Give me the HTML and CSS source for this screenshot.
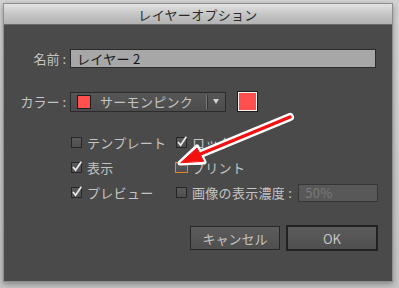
FILE: index.html
```html
<!DOCTYPE html>
<html lang="ja">
<head>
    <meta charset="UTF-8">
    <title>レイヤーオプション</title>
    <link rel="stylesheet" href="styles.css">
</head>
<body>
    <div class="dialog">
        <div class="title-bar">レイヤーオプション</div>

        <div class="dialog-body">
            <!-- 名前 -->
            <div class="field-row name-row">
                <span class="field-label">名前 :</span>
                <div class="text-input">レイヤー 2</div>
            </div>

            <!-- カラー -->
            <div class="field-row color-row">
                <span class="field-label">カラー :</span>
                <div class="select-box">
                    <span class="swatch-small"></span>
                    <span class="select-value">サーモンピンク</span>
                    <span class="select-divider"></span>
                    <span class="select-arrow"></span>
                </div>
                <span class="swatch-large"></span>
            </div>

            <!-- オプション -->
            <div class="options">
                <label class="option"><span class="check"></span>テンプレート</label>
                <label class="option"><span class="check checked"><svg viewBox="0 0 11 11"><path d="M2 5 L4.6 8.3 L10.3 -0.3"/></svg></span>ロック</label>
                <label class="option"><span class="check checked"><svg viewBox="0 0 11 11"><path d="M2 5 L4.6 8.3 L10.3 -0.3"/></svg></span>表示</label>
                <label class="option"><span class="check focused"></span>プリント</label>
                <label class="option"><span class="check checked"><svg viewBox="0 0 11 11"><path d="M2 5 L4.6 8.3 L10.3 -0.3"/></svg></span>プレビュー</label>
                <label class="option"><span class="check"></span>画像の表示濃度 :<span class="dim-input">50%</span></label>
            </div>

            <!-- ボタン -->
            <div class="buttons">
                <button class="btn">キャンセル</button>
                <button class="btn btn-default">OK</button>
            </div>
        </div>
    </div>

    <!-- 赤い矢印 -->
    <svg class="annotation" width="399" height="288" viewBox="0 0 399 288">
        <g fill="#fff" stroke="#fff" stroke-linejoin="round" stroke-linecap="round">
            <line x1="290" y1="117" x2="198" y2="155" stroke-width="8"/>
            <polygon points="180,163 197,147 204,162" stroke-width="5"/>
        </g>
        <g fill="#f21010" stroke="#f21010" stroke-linejoin="round" stroke-linecap="round">
            <line x1="290" y1="117" x2="198" y2="155" stroke-width="3.5"/>
            <polygon points="181,162.5 197,148 203.5,161" stroke-width="1"/>
        </g>
    </svg>
</body>
</html>
```

FILE: styles.css
```css
* {
    margin: 0;
    padding: 0;
    box-sizing: border-box;
}

body {
    width: 399px;
    height: 288px;
    background: linear-gradient(180deg, #d4d4d4 0%, #c6c6c6 100%);
    font-family: "Noto Sans CJK JP", "Noto Sans", sans-serif;
    font-size: 13px;
    color: #c4c4c4;
    position: relative;
    overflow: hidden;
}

/* ダイアログ */
.dialog {
    width: 390px;
    height: 279px;
    margin: 3px;
    border: 1px solid #8e8e8e;
    background: #4a4a4a;
    box-shadow: 0 2px 6px rgba(0, 0, 0, 0.35);
    display: flex;
    flex-direction: column;
}

.title-bar {
    height: 21px;
    background: linear-gradient(180deg, #e2e2e2 0%, #c6c6c6 50%, #b2b2b2 100%);
    border-bottom: 1px solid #6a6a6a;
    color: #2a2a2a;
    text-align: center;
    line-height: 21px;
    font-size: 13px;
    letter-spacing: 0.3px;
}

.dialog-body {
    flex: 1;
    padding: 24px 14px 0 0;
    display: flex;
    flex-direction: column;
}

/* 行 */
.field-row {
    display: flex;
    align-items: center;
}

.field-label {
    width: 62px;
    margin-right: 4px;
    text-align: right;
    white-space: nowrap;
}

.name-row {
    height: 19px;
}

.text-input {
    width: 306px;
    height: 19px;
    background: #a7a7a7;
    border: 1px solid #2b2b2b;
    color: #151515;
    padding-left: 6px;
    line-height: 17px;
    letter-spacing: 0.3px;
}

.color-row {
    height: 21px;
    margin-top: 23px;
}

.select-box {
    width: 156px;
    height: 20px;
    display: flex;
    align-items: center;
    background: linear-gradient(180deg, #565656 0%, #4c4c4c 100%);
    border: 1px solid #2b2b2b;
    padding-left: 6px;
}

.swatch-small {
    width: 14px;
    height: 14px;
    background: #ff4f4f;
    border: 1px solid #1e1e1e;
}

.select-value {
    margin-left: 9px;
    flex: 1;
    white-space: nowrap;
    letter-spacing: 0.3px;
}

.select-divider {
    width: 1px;
    height: 14px;
    background: #7a7a7a;
    box-shadow: 1px 0 0 #333;
}

.select-arrow {
    width: 0;
    height: 0;
    margin: 0 6px 0 6px;
    border-left: 3.5px solid transparent;
    border-right: 3.5px solid transparent;
    border-top: 5px solid #d0d0d0;
}

.swatch-large {
    width: 21px;
    height: 21px;
    margin-left: 11px;
    background: #ff4f4f;
    border: 1px solid #1e1e1e;
    box-shadow: inset 0 0 0 1px #f4f4f4;
}

/* チェックボックス */
.options {
    margin-top: 18px;
    padding-left: 67px;
    display: grid;
    grid-template-columns: 105px 1fr;
    grid-auto-rows: 25px;
}

.option {
    display: flex;
    align-items: center;
    white-space: nowrap;
    letter-spacing: 0.3px;
}

.check {
    width: 11px;
    height: 11px;
    margin-right: 5px;
    border: 1px solid #262626;
    background: linear-gradient(180deg, #5a5a5a 0%, #4e4e4e 100%);
    position: relative;
    flex-shrink: 0;
}

.check svg {
    position: absolute;
    left: -1px;
    top: -1px;
    width: 11px;
    height: 11px;
    overflow: visible;
}

.check svg path {
    fill: none;
    stroke: #e6e6e6;
    stroke-width: 1.8;
}

.check.focused {
    width: 13px;
    height: 11px;
    margin-left: -1px;
    margin-right: 4px;
    border: 1px solid #e8871e;
}

.dim-input {
    width: 80px;
    height: 18px;
    margin-left: 6px;
    background: #585858;
    border: 1px solid #363636;
    color: #7a7a7a;
    padding-left: 6px;
    line-height: 16px;
}

/* ボタン */
.buttons {
    margin-top: 20px;
    display: flex;
    justify-content: flex-end;
    align-items: center;
    gap: 6px;
}

.btn {
    width: 90px;
    height: 24px;
    font-family: inherit;
    font-size: 13px;
    color: #c4c4c4;
    background: linear-gradient(180deg, #5c5c5c 0%, #4f4f4f 100%);
    border: 1px solid #262626;
}

.btn-default {
    width: 92px;
    height: 26px;
    border: 2px solid #222;
}

/* 注釈 */
.annotation {
    position: absolute;
    top: 0;
    left: 0;
    pointer-events: none;
}
```
